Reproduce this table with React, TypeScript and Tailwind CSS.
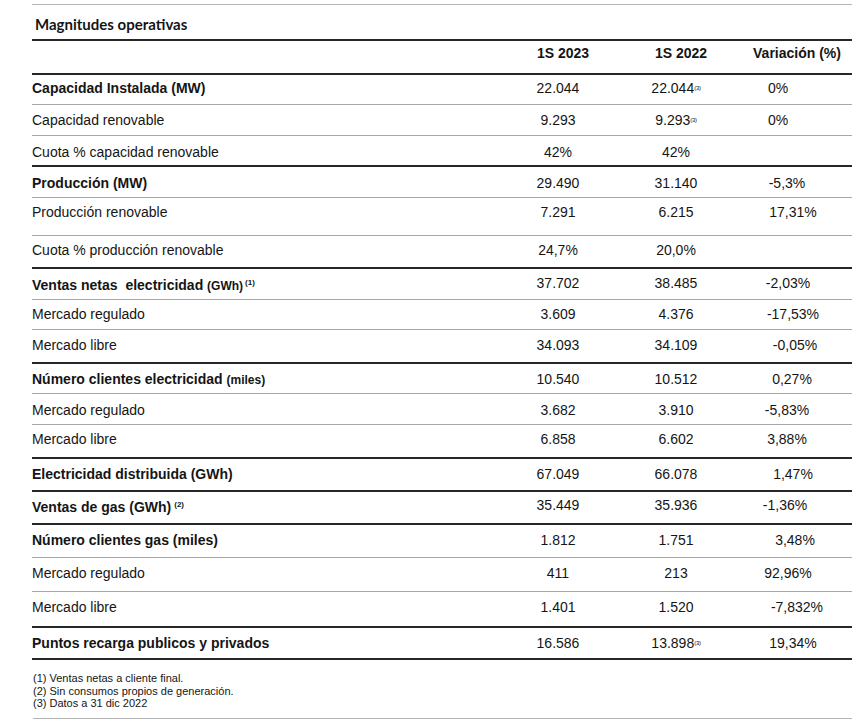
import React from "react";

type Row = {
  label: React.ReactNode;
  bold?: boolean;
  a: string;
  b: React.ReactNode;
  c: string;
  cShift?: string;
  box: string;
  line: "thick" | "thin";
};

const Sup = ({ n }: { n: string }) => (
  <span className="text-[6px] align-[3px] tracking-tighter">({n})</span>
);

const rows: Row[] = [
  { label: "Capacidad Instalada (MW)", bold: true, a: "22.044", b: <>22.044<Sup n="3" /></>, c: "0%", cShift: "pr-[32px]", box: "h-[30px] pt-[5px]", line: "thin" },
  { label: "Capacidad renovable", a: "9.293", b: <>9.293<Sup n="3" /></>, c: "0%", cShift: "pr-[32px]", box: "h-[31px] pt-[7px]", line: "thin" },
  { label: "Cuota % capacidad renovable", a: "42%", b: "42%", c: "", box: "h-[31px] pt-[8px]", line: "thick" },
  { label: "Producción (MW)", bold: true, a: "29.490", b: "31.140", c: "-5,3%", cShift: "pr-[14px]", box: "h-[31px] pt-[8px]", line: "thin" },
  { label: "Producción renovable", a: "7.291", b: "6.215", c: "17,31%", cShift: "pr-[2px]", box: "h-[38px] pt-[6px]", line: "thin" },
  { label: "Cuota % producción renovable", a: "24,7%", b: "20,0%", c: "", box: "h-[33px] pt-[6px]", line: "thick" },
  {
    label: (
      <>
        Ventas netas&nbsp; electricidad <span className="text-[12px]">(GWh)</span>
        <span className="text-[8px] align-[5px] ml-[2px]">(1)</span>
      </>
    ),
    bold: true, a: "37.702", b: "38.485", c: "-2,03%", cShift: "pr-[12px]", box: "h-[31px] pt-[6px]", line: "thin",
  },
  { label: "Mercado regulado", a: "3.609", b: "4.376", c: "-17,53%", cShift: "pr-[2px]", box: "h-[30px] pt-[6px]", line: "thin" },
  { label: "Mercado libre", a: "34.093", b: "34.109", c: "-0,05%", cShift: "pl-[2px]", box: "h-[34px] pt-[7px]", line: "thick" },
  {
    label: (
      <>
        Número clientes electricidad <span className="text-[12px]">(miles)</span>
      </>
    ),
    bold: true, a: "10.540", b: "10.512", c: "0,27%", cShift: "pr-[4px]", box: "h-[30px] pt-[7px]", line: "thin",
  },
  { label: "Mercado regulado", a: "3.682", b: "3.910", c: "-5,83%", cShift: "pr-[14px]", box: "h-[31px] pt-[8px]", line: "thin" },
  { label: "Mercado libre", a: "6.858", b: "6.602", c: "3,88%", cShift: "pr-[14px]", box: "h-[34px] pt-[6px]", line: "thick" },
  { label: "Electricidad distribuida (GWh)", bold: true, a: "67.049", b: "66.078", c: "1,47%", cShift: "pr-[2px]", box: "h-[33px] pt-[7px]", line: "thick" },
  {
    label: (
      <>
        Ventas de gas (GWh)
        <span className="text-[8px] align-[5px] ml-[3px]">(2)</span>
      </>
    ),
    bold: true, a: "35.449", b: "35.936", c: "-1,36%", cShift: "pr-[18px]", box: "h-[33px] pt-[5px]", line: "thick",
  },
  { label: "Número clientes gas (miles)", bold: true, a: "1.812", b: "1.751", c: "3,48%", cShift: "pl-[2px]", box: "h-[33px] pt-[7px]", line: "thin" },
  { label: "Mercado regulado", a: "411", b: "213", c: "92,96%", cShift: "pr-[12px]", box: "h-[34px] pt-[7px]", line: "thin" },
  { label: "Mercado libre", a: "1.401", b: "1.520", c: "-7,832%", cShift: "pl-[6px]", box: "h-[36px] pt-[7px]", line: "thick" },
  { label: "Puntos recarga publicos y privados", bold: true, a: "16.586", b: <>13.898<Sup n="3" /></>, c: "19,34%", cShift: "pr-[2px]", box: "h-[32px] pt-[7px]", line: "thick" },
];

export default function App() {
  return (
    <div className="w-[859px] h-[726px] bg-white text-[#151515] pl-[32px] pr-[7px] pt-[4px] font-['Liberation_Sans',Arial,sans-serif]">
      <div className="border-t border-[#b4b4b4]" />
      <div className="h-[36px] pt-[10px] pl-[3px] border-b-2 border-[#262626] text-[15px] leading-[18px] font-bold font-['Lato',sans-serif]">
        Magnitudes operativas
      </div>

      <div className="flex h-[34px] pt-[4px] border-b-2 border-[#262626] text-[14px] leading-[16px] font-bold">
        <div className="flex-1" />
        <div className="w-[116px] text-center pl-[10px]">1S 2023</div>
        <div className="w-[120px] text-center pl-[10px]">1S 2022</div>
        <div className="w-[116px] text-center pl-[6px]">Variación (%)</div>
      </div>

      {rows.map((r, i) => (
        <div
          key={i}
          className={`flex text-[14px] leading-[16px] ${r.box} ${
            r.line === "thick" ? "border-b-2 border-[#262626]" : "border-b border-[#a8a8a8]"
          }`}
        >
          <div className={`flex-1 ${r.bold ? "font-bold" : ""}`}>{r.label}</div>
          <div className="w-[116px] text-center">{r.a}</div>
          <div className="w-[120px] text-center">{r.b}</div>
          <div className={`w-[116px] text-center ${r.cShift ?? ""}`}>{r.c}</div>
        </div>
      ))}

      <div className="mt-[12px] text-[11px] leading-[12.5px] pl-[1px]">
        <p>(1) Ventas netas a cliente final.</p>
        <p>(2) Sin consumos propios de generación.</p>
        <p>(3) Datos a 31 dic 2022</p>
      </div>
      <div className="mt-[8px] ml-[1px] border-t border-[#b4b4b4]" />
    </div>
  );
}
